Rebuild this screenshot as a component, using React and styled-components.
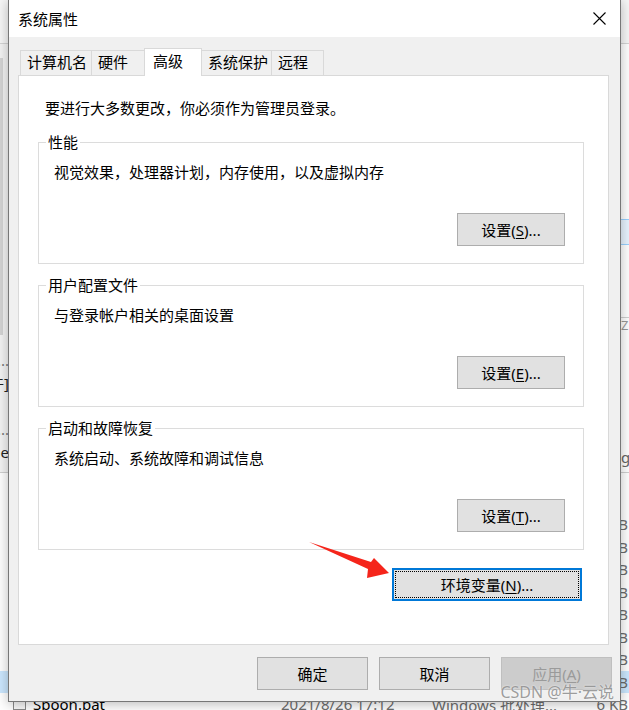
import React from 'react';
import styled, { createGlobalStyle } from 'styled-components';

const GlobalStyle = createGlobalStyle`
  html, body {
    margin: 0;
    padding: 0;
    background: #f3f3f3;
  }
  body {
    font-family: "Noto Sans", "Noto Sans CJK SC", sans-serif;
    color: #000;
  }
`;

const Desktop = styled.div`
  position: relative;
  width: 629px;
  height: 710px;
  overflow: hidden;
  background: #f3f3f3;
`;

/* ---------- explorer window behind the dialog ---------- */

const Explorer = styled.div`
  position: absolute;
  inset: 0;
  display: flex;
  flex-direction: column;
  font-size: 15px;
`;

const ExplorerTop = styled.div`
  height: 43px;
  flex-shrink: 0;
  background: #f7f7f7;
  border-bottom: 1px solid #d5d5d5;
`;

const ExplorerMiddle = styled.div`
  height: 428px;
  flex-shrink: 0;
  display: flex;
  justify-content: space-between;
  border-bottom: 1px solid #d0d0d0;
`;

const LeftSliver = styled.div`
  width: 9px;
  display: flex;
  flex-direction: column;
  align-items: flex-end;
  background: #f4f4f4;
`;

const ScrollThumb = styled.div`
  align-self: flex-start;
  width: 3px;
  height: 277px;
  margin: 14px 0 14px;
  background: #d4d4d4;
`;

const SliverItem = styled.div`
  height: 23px;
  line-height: 23px;
  white-space: nowrap;
  display: flex;
  justify-content: flex-end;
  color: ${p => (p.$dim ? '#777' : '#222')};
`;

const RightSliver = styled.div`
  width: 9px;
  display: flex;
  flex-direction: column;
  background: #fff;
`;

const SliverGap = styled.div`
  height: ${p => p.$h}px;
  flex-shrink: 0;
  background: ${p => p.$bg || 'transparent'};
`;

const SliverSelect = styled.div`
  height: 24px;
  border-top: 1px solid #99d1ff;
  border-bottom: 1px solid #99d1ff;
  background: #e8f4ff;
`;

const SliverHeader = styled.div`
  height: 22px;
  border-top: 1px solid #d0d0d0;
  color: #999;
  font-size: 13px;
  line-height: 14px;
  padding-left: 1px;
`;

const SliverGlyph = styled.div`
  height: 22px;
  line-height: 22px;
  color: #666;
  padding-left: 1px;
`;

const FileList = styled.div`
  display: flex;
  flex-direction: column;
  padding-top: 40px;
  background: #fff;
  flex: 1;
`;

const FileRow = styled.div`
  height: 22.5px;
  flex-shrink: 0;
  display: grid;
  grid-template-columns: 20px 248px 151px 1fr auto;
  align-items: center;
  padding: 0 1px 0 13px;
  background: ${p => (p.$selected ? '#cce8ff' : 'transparent')};
  white-space: nowrap;
`;

const FileIcon = styled.span`
  width: 13px;
  height: 11px;
  border: 1px solid #8a8a8a;
  background: #fafafa;
  box-sizing: border-box;
`;

const FileCell = styled.span`
  color: ${p => p.$color || '#000'};
  overflow: hidden;
`;

/* ---------- dialog ---------- */

const Dialog = styled.div`
  position: relative;
  z-index: 1;
  margin: -1px 0 0 8px;
  width: 611px;
  height: 701px;
  border: 1px solid #777;
  background: #f0f0f0;
  box-shadow: 0 2px 12px rgba(0, 0, 0, 0.28);
  display: flex;
  flex-direction: column;
  font-family: "Noto Sans", "Noto Sans CJK SC", sans-serif;
  font-size: 15px;
`;

const TitleBar = styled.div`
  height: 37px;
  flex-shrink: 0;
  background: #fff;
  display: flex;
  align-items: center;
  padding-left: 9px;
`;

const Title = styled.span`
  font-size: 15px;
  line-height: 20px;
  color: #000;
`;

const CloseButton = styled.div`
  margin-left: auto;
  width: 42px;
  height: 37px;
  display: flex;
  align-items: center;
  justify-content: center;
`;

const Body = styled.div`
  flex: 1;
  display: flex;
  flex-direction: column;
  padding: 11px 8px 11px 9px;
`;

const TabStrip = styled.div`
  display: flex;
  align-items: flex-end;
  height: 28px;
  padding-left: 2px;
  margin-bottom: -1px;
  position: relative;
  z-index: 1;
`;

const Tab = styled.div`
  box-sizing: border-box;
  width: ${p => p.$w}px;
  height: ${p => (p.$active ? 28 : 25)}px;
  margin-bottom: ${p => (p.$active ? 0 : 1)}px;
  margin-left: ${p => (p.$first ? 0 : -1)}px;
  padding-left: ${p => (p.$active ? 8 : 6)}px;
  border: 1px solid #d9d9d9;
  border-bottom: none;
  background: ${p => (p.$active ? '#fff' : '#f0f0f0')};
  line-height: ${p => (p.$active ? 25 : 23)}px;
  font-size: 15px;
  white-space: nowrap;
  position: relative;
  z-index: ${p => (p.$active ? 2 : 1)};
`;

const Panel = styled.div`
  flex: 1;
  margin-right: 3px;
  background: #fff;
  border: 1px solid #d9d9d9;
  padding: 22px 24px 0 19px;
  display: flex;
  flex-direction: column;
`;

const Intro = styled.p`
  margin: 0 0 14px 7px;
  line-height: 20px;
  font-size: 15px;
`;

const Group = styled.fieldset`
  margin: 0 0 11px;
  min-width: 0;
  border: 1px solid #dcdcdc;
  padding: 10px 18px 17px 15px;
  display: flex;
  flex-direction: column;
`;

const Legend = styled.legend`
  padding: 0 2px;
  margin-left: -8px;
  line-height: 20px;
  font-size: 15px;
`;

const GroupText = styled.div`
  line-height: 20px;
  font-size: 15px;
`;

const ButtonRow = styled.div`
  display: flex;
  justify-content: flex-end;
  margin-top: ${p => p.$top || 0}px;
  margin-right: ${p => p.$right || 0}px;
`;

const Button = styled.button`
  position: relative;
  box-sizing: border-box;
  width: ${p => p.$w}px;
  height: 33px;
  padding: 0;
  background: ${p => (p.disabled ? '#cccccc' : '#e1e1e1')};
  border: ${p =>
    p.$default ? '2px solid #0078d7' : `1px solid ${p.disabled ? '#bfbfbf' : '#adadad'}`};
  color: ${p => (p.disabled ? '#9a9a9a' : '#000')};
  font-family: "Noto Sans", "Noto Sans CJK SC", sans-serif;
  font-size: 15px;
  line-height: 20px;

  u {
    text-underline-offset: 2px;
  }

  ${p =>
    p.$default &&
    `
    &::after {
      content: '';
      position: absolute;
      inset: 1px;
      border: 1px dotted #000;
    }
  `}
`;

const Footer = styled.div`
  display: flex;
  justify-content: flex-end;
  gap: 11px;
  margin-top: 12px;
`;

/* ---------- overlays ---------- */

const Annotation = styled.svg`
  position: absolute;
  left: 0;
  top: 0;
  z-index: 2;
  pointer-events: none;
`;

const Watermark = styled.div`
  position: absolute;
  right: 15px;
  bottom: 8px;
  z-index: 3;
  font-family: "Noto Sans", "Noto Sans CJK SC", sans-serif;
  font-size: 16px;
  line-height: 20px;
  color: rgba(140, 140, 140, 0.85);
  text-shadow: 0 0 2px rgba(255, 255, 255, 0.9);
  white-space: nowrap;
`;

const files = [
  { name: 'spark-submit.cmd', date: '2021/8/26 17:12', type: 'Windows 命令脚本', size: '1 KB' },
  { name: 'carte.bat', date: '2021/8/26 17:12', type: 'Windows 批处理...', size: '2 KB' },
  { name: 'encr.bat', date: '2021/8/26 17:12', type: 'Windows 批处理...', size: '2 KB' },
  { name: 'import.bat', date: '2021/8/26 17:12', type: 'Windows 批处理...', size: '3 KB' },
  { name: 'Kitchen.bat', date: '2021/8/26 17:12', type: 'Windows 批处理...', size: '2 KB' },
  { name: 'Pan.bat', date: '2021/8/26 17:12', type: 'Windows 批处理...', size: '2 KB' },
  { name: 'purge-utility.bat', date: '2021/8/26 17:12', type: 'Windows 批处理...', size: '2 KB' },
  { name: 'set-pentaho-env.bat', date: '2021/8/26 17:12', type: 'Windows 批处理...', size: '5 KB', selected: true },
  { name: 'Spoon.bat', date: '2021/8/26 17:12', type: 'Windows 批处理...', size: '6 KB' },
];

const tabs = [
  { label: '计算机名', w: 72 },
  { label: '硬件', w: 54 },
  { label: '高级', w: 58, active: true },
  { label: '系统保护', w: 71 },
  { label: '远程', w: 53 },
];

const groups = [
  { title: '性能', text: '视觉效果，处理器计划，内存使用，以及虚拟内存', key: 'S' },
  { title: '用户配置文件', text: '与登录帐户相关的桌面设置', key: 'E' },
  { title: '启动和故障恢复', text: '系统启动、系统故障和调试信息', key: 'T' },
];

const CloseIcon = () => (
  <svg width="13" height="13" viewBox="0 0 13 13">
    <path d="M0.5 0.5 L12.5 12.5 M12.5 0.5 L0.5 12.5" stroke="#000" strokeWidth="1.1" fill="none" />
  </svg>
);

const App = () => {
  return (
    <Desktop>
      <GlobalStyle />

      <Explorer>
        <ExplorerTop />
        <ExplorerMiddle>
          <LeftSliver>
            <ScrollThumb />
            <SliverItem $dim>数据...</SliverItem>
            <SliverItem>文件]</SliverItem>
            <SliverItem />
            <SliverItem $dim>数据...</SliverItem>
            <SliverItem>type</SliverItem>
          </LeftSliver>
          <RightSliver>
            <SliverGap $h={175} />
            <SliverSelect />
            <SliverGap $h={72} />
            <SliverHeader>Z</SliverHeader>
            <SliverGap $h={106} />
            <SliverGlyph>g</SliverGlyph>
          </RightSliver>
        </ExplorerMiddle>
        <FileList>
          {files.map(f => (
            <FileRow key={f.name} $selected={f.selected}>
              <FileIcon />
              <FileCell>{f.name}</FileCell>
              <FileCell $color="#6d6d6d">{f.date}</FileCell>
              <FileCell $color="#6d6d6d">{f.type}</FileCell>
              <FileCell $color="#6d6d6d">{f.size}</FileCell>
            </FileRow>
          ))}
        </FileList>
      </Explorer>

      <Dialog>
        <TitleBar>
          <Title>系统属性</Title>
          <CloseButton>
            <CloseIcon />
          </CloseButton>
        </TitleBar>

        <Body>
          <TabStrip>
            {tabs.map((t, i) => (
              <Tab key={t.label} $w={t.w} $active={t.active} $first={i === 0}>
                {t.label}
              </Tab>
            ))}
          </TabStrip>

          <Panel>
            <Intro>要进行大多数更改，你必须作为管理员登录。</Intro>

            {groups.map(g => (
              <Group key={g.title}>
                <Legend>{g.title}</Legend>
                <GroupText>{g.text}</GroupText>
                <ButtonRow $top={31}>
                  <Button $w={108}>
                    设置(<u>{g.key}</u>)...
                  </Button>
                </ButtonRow>
              </Group>
            ))}

            <ButtonRow $top={7} $right={2}>
              <Button $w={190} $default>
                环境变量(<u>N</u>)...
              </Button>
            </ButtonRow>
          </Panel>

          <Footer>
            <Button $w={111}>确定</Button>
            <Button $w={111}>取消</Button>
            <Button $w={111} disabled>
              应用(<u>A</u>)
            </Button>
          </Footer>
        </Body>
      </Dialog>

      <Annotation width="629" height="710" viewBox="0 0 629 710">
        <polygon
          points="309,542 371,562 374,558 389,573 367,578 368,569"
          fill="#f5251b"
        />
      </Annotation>

      <Watermark>CSDN @牛·云说</Watermark>
    </Desktop>
  );
};

export default App;
